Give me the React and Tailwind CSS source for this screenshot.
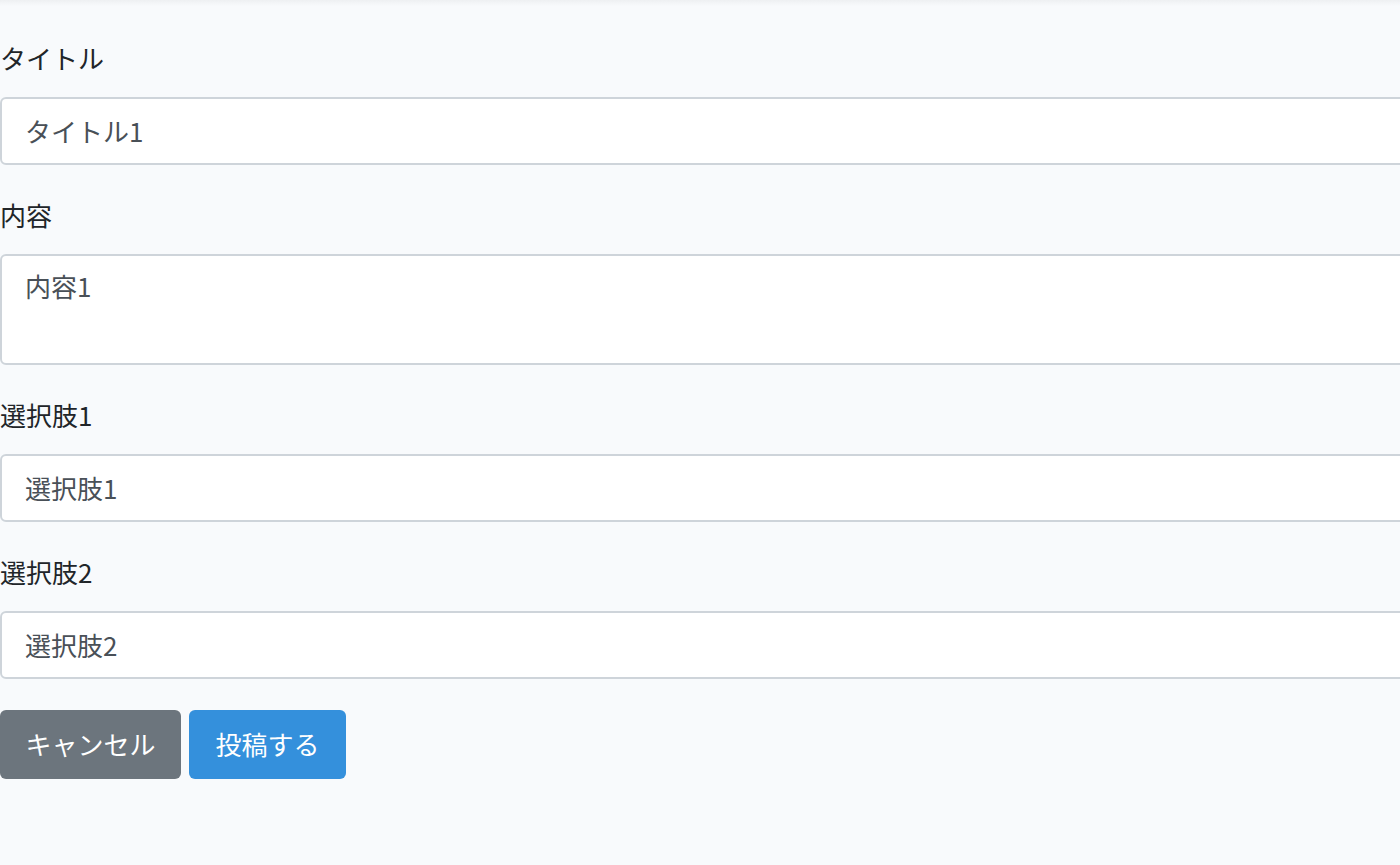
const font = { fontFamily: '"Noto Sans CJK JP", "Noto Sans", sans-serif' };

function Field({ label, value, multiline = false }) {
  return (
    <div className="mb-[32px]">
      <label className="block mb-[21px] text-[26px] leading-[36px] text-[#212529]">
        {label}
      </label>
      {multiline ? (
        <textarea
          defaultValue={value}
          className="block w-[1440px] h-[111px] resize-none rounded-[6px] border-2 border-[#ced4da] bg-white px-[23px] pt-[12px] text-[26px] leading-[36px] text-[#495057] outline-none"
          style={font}
        />
      ) : (
        <input
          defaultValue={value}
          className="block w-[1440px] h-[68px] rounded-[6px] border-2 border-[#ced4da] bg-white px-[23px] pb-[2px] text-[26px] text-[#495057] outline-none"
          style={font}
        />
      )}
    </div>
  );
}

export default function App() {
  return (
    <div className="min-h-screen overflow-hidden bg-[#f8fafc]" style={font}>
      <div className="h-[6px] bg-gradient-to-b from-[#eef0f2] to-[#f8fafc]" />
      <form className="pt-[34px]">
        <Field label="タイトル" value="タイトル1" />
        <Field label="内容" value="内容1" multiline />
        <Field label="選択肢1" value="選択肢1" />
        <Field label="選択肢2" value="選択肢2" />
        <div className="-mt-[1px] flex gap-[8px]">
          <button
            type="button"
            className="w-[181px] h-[69px] rounded-[6px] bg-[#6c757d] pb-[2px] text-[26px] text-white"
          >
            キャンセル
          </button>
          <button
            type="submit"
            className="w-[157px] h-[69px] rounded-[6px] bg-[#3490dc] pb-[2px] text-[26px] text-white"
          >
            投稿する
          </button>
        </div>
      </form>
    </div>
  );
}
